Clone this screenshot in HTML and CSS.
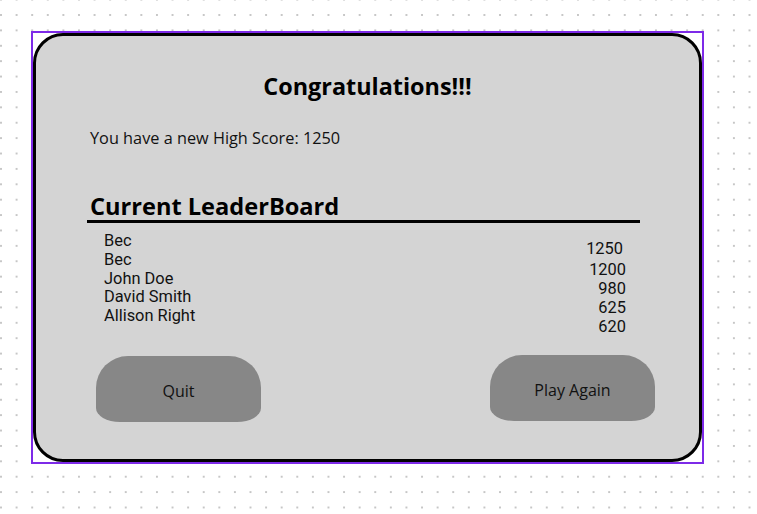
FILE: index.html
```html
<!DOCTYPE html>
<html lang="en">
<head>
<meta charset="utf-8">
<title>Congratulations</title>
<link rel="stylesheet" href="styles.css">
</head>
<body>
  <div class="frame">
    <section class="card">
      <h1 class="title">Congratulations!!!</h1>
      <p class="score">You have a new High Score: 1250</p>
      <h2 class="board-title">Current LeaderBoard</h2>
      <div class="rule"></div>
      <div class="board">
        <ul class="names">
          <li>Bec</li>
          <li>Bec</li>
          <li>John Doe</li>
          <li>David Smith</li>
          <li>Allison Right</li>
        </ul>
        <ul class="points">
          <li class="p1">1250</li>
          <li class="p2">1200</li>
          <li class="p3">980</li>
          <li class="p4">625</li>
          <li class="p5">620</li>
        </ul>
      </div>
      <div class="actions">
        <button class="btn btn-quit">Quit</button>
        <button class="btn btn-again">Play Again</button>
      </div>
    </section>
  </div>
</body>
</html>
```

FILE: styles.css
```css
* { box-sizing: border-box; }

html, body { height: 100%; }

body {
  margin: 0;
  background-color: #ffffff;
  background-image: radial-gradient(circle, #c6c6c6 0.9px, rgba(198,198,198,0) 1.5px);
  background-size: 15.6px 15.4px;
  background-position: -6.8px 7.3px;
  font-family: "Open Sans", "Noto Sans", sans-serif;
  color: #111;
  padding: 31px 0 0 31px;
}

.frame {
  width: 673px;
  height: 433px;
  border: 2px solid #7d2ae8;
  background: #ffffff;
}

.card {
  width: 669px;
  height: 429px;
  border: 3px solid #000;
  border-radius: 30px;
  background: #d4d4d4;
  padding: 35px 0 0 54px;
}

.title {
  margin: 0;
  padding-right: 54px;
  text-align: center;
  font-size: 23.4px;
  line-height: 30px;
  font-weight: 700;
  color: #000;
}

.score {
  margin: 26px 0 0;
  font-size: 16.3px;
  line-height: 22px;
}

.board-title {
  margin: 43px 0 0;
  font-size: 23.6px;
  line-height: 28px;
  font-weight: 700;
  color: #000;
}

.rule {
  width: 553px;
  height: 3px;
  margin: 0 0 0 -3px;
  background: #000;
}

.board {
  display: flex;
  justify-content: space-between;
  width: 522px;
  margin: 9px 0 0 14px;
  font-family: Roboto, "Open Sans", sans-serif;
  font-size: 16.4px;
}

.names, .points {
  list-style: none;
  margin: 0;
  padding: 0;
}

.names li {
  line-height: 18.8px;
}

.points {
  text-align: right;
  padding-top: 7px;
}

.points li { line-height: 19px; }
.points .p1 { margin-right: 3px; }
.points .p2 { margin-top: 2px; }

.actions {
  display: flex;
  justify-content: space-between;
  width: 559px;
  margin: 19px 0 0 6px;
}

.btn {
  width: 165px;
  height: 66px;
  border: none;
  border-radius: 32px 32px 24px 24px / 32px 32px 14px 14px;
  background: #878787;
  color: #111;
  font-family: "Open Sans", "Noto Sans", sans-serif;
  font-size: 16px;
  padding: 3px 0 0;
}

.btn-quit { margin-top: 1px; }
```
